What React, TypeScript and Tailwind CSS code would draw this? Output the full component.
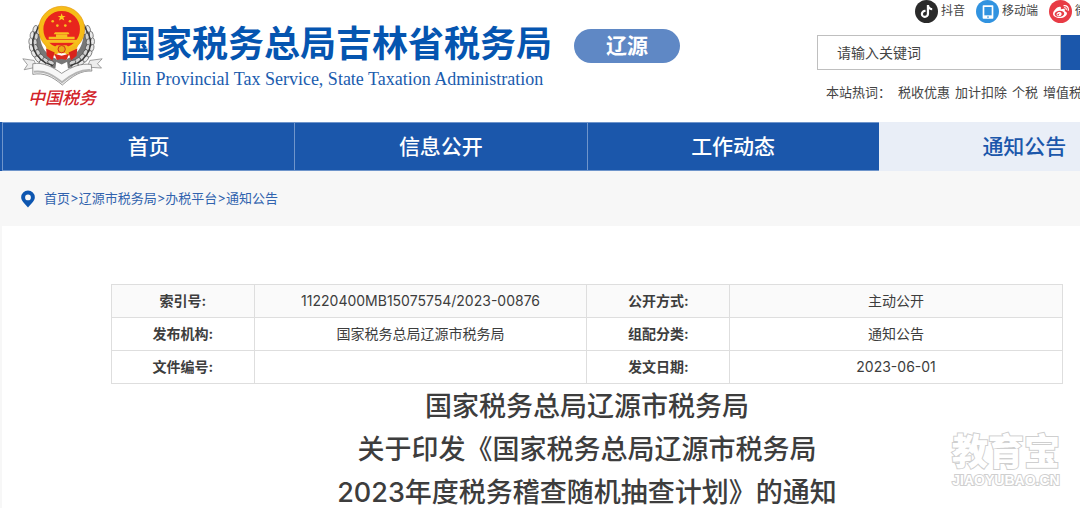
import { FaTiktok, FaWeibo } from 'react-icons/fa';

const navItems = [
  { label: '首页', active: false },
  { label: '信息公开', active: false },
  { label: '工作动态', active: false },
  { label: '通知公告', active: true },
];

const crumbs = ['首页', '辽源市税务局', '办税平台', '通知公告'];

const hotWords = ['税收优惠', '加计扣除', '个税', '增值税'];

const infoRows = [
  ['索引号:', '11220400MB15075754/2023-00876', '公开方式:', '主动公开'],
  ['发布机构:', '国家税务总局辽源市税务局', '组配分类:', '通知公告'],
  ['文件编号:', '', '发文日期:', '2023-06-01'],
];

const leaves = [
  { x: 108, y: 86, r: 20 },
  { x: 99, y: 104, r: 10 },
  { x: 95, y: 123, r: 0 },
  { x: 97, y: 142, r: -15 },
  { x: 104, y: 159, r: -28 },
  { x: 115, y: 174, r: -40 },
  { x: 129, y: 186, r: -52 },
  { x: 146, y: 194, r: -66 },
];

function WheatEar() {
  return (
    <g>
      <path d="M122 66 C84 100 80 158 128 192 L166 204 L170 176 C130 160 112 126 122 66Z" fill="#777" />
      {leaves.map((leaf) => (
        <g key={leaf.y} transform={`translate(${leaf.x} ${leaf.y}) rotate(${leaf.r})`}>
          <ellipse cx="-3" cy="0" rx="6" ry="11" fill="#e9e9e9" stroke="#555" strokeWidth="2" />
          <ellipse cx="10" cy="3" rx="6" ry="11" fill="#d2d2d2" stroke="#444" strokeWidth="2" />
          <path d="M3 -8V12" stroke="#333" strokeWidth="3" />
        </g>
      ))}
    </g>
  );
}

function Emblem() {
  return (
    <svg viewBox="60 10 252 250" className="h-[83px] w-[84px]" aria-hidden="true">
      <WheatEar />
      <g transform="translate(370 0) scale(-1 1)">
        <WheatEar />
      </g>
      <circle cx="185" cy="86" r="62" fill="#e8251d" stroke="#f6bd18" strokeWidth="14" />
      <circle cx="185" cy="86" r="69" fill="none" stroke="#e59a10" strokeWidth="2" />
      <path d="M185 38l3 8h9l-7 5 3 9-8-5-8 5 3-9-7-5h9z" fill="#fbd01c" />
      <g fill="#f7bf20">
        <circle cx="158" cy="62" r="4" />
        <circle cx="172" cy="75" r="4" />
        <circle cx="196" cy="75" r="4" />
        <circle cx="210" cy="62" r="4" />
        <path d="M165 95h40l4 6h-48zM168 102h34v7h-34zM146 109h78v7h-78z" />
        <path d="M138 118h94v9h-94z" />
      </g>
      <path d="M134 132l28 10 8-8h30l8 8 28-10-10 22-20 12-10-8h-22l-10 8-20-12z" fill="#f3b51a" />
      <path d="M138 144l26 12-7 24-17-14zM232 144l-26 12 7 24 17-14z" fill="#d9231b" />
      <circle cx="185" cy="146" r="11" fill="#e8a917" stroke="#d8281c" strokeWidth="3" />
      <path d="M163 160l22 6 22-6-7 18-15 6-15-6z" fill="#dc2a1e" />
      <path d="M160 180l25-4 25 4-25 12z" fill="#777" />
      {/* silver ribbon */}
      <path d="M68 175l34 5 8 20-38 8 10-15z" fill="#ededed" stroke="#777" strokeWidth="2" />
      <path d="M307 175l-37 5-8 20 43 3-12-13z" fill="#ededed" stroke="#777" strokeWidth="2" />
      <path
        d="M98 190C130 184 158 200 185 219C214 200 240 188 274 192L276 212C244 210 220 225 187 254C156 228 132 216 98 222Z"
        fill="#f7f7f7"
        stroke="#666"
        strokeWidth="2"
      />
      <path d="M101 214c34-4 56 8 85 32 28-24 56-39 86-37" fill="none" stroke="#b5b5b5" strokeWidth="6" />
    </svg>
  );
}

function Header() {
  return (
    <header className="bg-white">
      <div className="flex h-[122px] min-w-[1172px] justify-between">
        <div className="flex">
          <a href="#" className="ml-5 flex w-[84px] flex-col items-center pt-1">
            <Emblem />
            <span className="font-['Liberation_Serif','Noto_Sans_CJK_SC',serif] text-[17px] leading-6 font-medium text-[#d2232a] italic">
              中国税务
            </span>
          </a>
          <div className="ml-4 pt-5">
            <h1 className="text-[36px] leading-[48px] font-bold text-[#0555b0]">国家税务总局吉林省税务局</h1>
            <p className="font-['Liberation_Serif',serif] text-[18px] leading-[22px] text-[#1a5cae]">
              Jilin Provincial Tax Service, State Taxation Administration
            </p>
          </div>
          <span className="mt-[29px] ml-[22px] flex h-[34px] w-[106px] items-center justify-center rounded-full bg-[#5f88c5] text-[21px] font-bold text-white">
            辽源
          </span>
        </div>

        <div className="w-[355px]">
          <div className="ml-[98px] flex gap-[11px] text-[12px] leading-[23px] whitespace-nowrap text-[#444]">
            <a href="#" className="flex gap-[3px]">
              <span className="flex size-[23px] items-center justify-center rounded-full bg-[#2a2a2a] text-white">
                <FaTiktok size={13} />
              </span>
              <span className="-mt-px">抖音</span>
            </a>
            <a href="#" className="flex gap-[3px]">
              <span className="flex size-[23px] items-center justify-center rounded-full bg-[#3193e0]">
                <svg viewBox="0 0 24 24" className="size-4" fill="none" aria-hidden="true">
                  <rect x="4" y="2" width="16" height="20" rx="1" fill="#fff" />
                  <rect x="6.5" y="4.5" width="11" height="12.5" fill="#3193e0" />
                  <circle cx="12" cy="19.5" r="1.3" fill="#3193e0" />
                </svg>
              </span>
              <span className="-mt-px">移动端</span>
            </a>
            <a href="#" className="flex gap-[3px]">
              <span className="flex size-[23px] items-center justify-center rounded-full bg-[#e83b45] text-white">
                <FaWeibo size={16} />
              </span>
              <span className="-mt-px">微博</span>
            </a>
          </div>
          <form className="mt-3 flex h-[35px]">
            <input
              type="text"
              aria-label="搜索"
              placeholder="请输入关键词"
              className="w-[244px] border border-[#bfbfbf] px-[19px] text-[14px] text-[#444] placeholder:text-[#444]"
            />
            <button type="button" aria-label="搜索" className="flex-1 bg-[#1b57ab]" />
          </form>
          <div className="mt-3 ml-[9px] flex gap-[5px] text-[13px] leading-5 whitespace-nowrap text-[#444]">
            <span className="mr-0.5">本站热词：</span>
            {hotWords.map((word) => (
              <a key={word} href="#">
                {word}
              </a>
            ))}
          </div>
        </div>
      </div>
    </header>
  );
}

export default function App() {
  return (
    <div className="relative min-h-screen overflow-hidden bg-[#f7f7f7] font-['Inter','Noto_Sans_CJK_SC',sans-serif] text-[#3d3d3d]">
      <Header />

      <nav className="flex min-w-[1170px] bg-[#1b57ab] pl-0.5">
        {navItems.map((item) => (
          <a
            key={item.label}
            href="#"
            className={
              item.active
                ? 'flex-1 border-y border-[#e9eef7] bg-[#e9eef7] text-center text-[21px] leading-[47px] font-medium text-[#1b57ab]'
                : 'flex-1 border-y border-l border-[#6f95cb] text-center text-[21px] leading-[47px] font-medium text-white'
            }
          >
            {item.label}
          </a>
        ))}
      </nav>

      <div className="flex h-[55px] items-center gap-2 pl-5 text-[13px] text-[#3163ae]">
        <svg viewBox="0 0 16 20" className="h-[18px] w-4" aria-hidden="true">
          <path
            fill="#0d56b0"
            fillRule="evenodd"
            d="M8 .5A7.600 7.600 0 0 0 .4 8.100C.4 12.500 5 15.500 8 19.500c3-4 7.600-7 7.600-11.400A7.600 7.600 0 0 0 8 .5Zm0 4.500a3.200 3.200 0 1 1 0 6.400 3.200 3.200 0 0 1 0-6.400Z"
          />
        </svg>
        <div>
          {crumbs.map((crumb, i) => (
            <span key={crumb}>
              {i > 0 && '>'}
              <a href="#">{crumb}</a>
            </span>
          ))}
        </div>
      </div>

      <main className="ml-0.5 min-w-[1170px] bg-white px-[109px] pt-[58px]">
        <table className="w-full table-fixed border-collapse text-center text-[14px] leading-5">
          <colgroup>
            <col className="w-[15%]" />
            <col className="w-[35%]" />
            <col className="w-[15%]" />
            <col className="w-[35%]" />
          </colgroup>
          <tbody>
            {infoRows.map(([nameA, valueA, nameB, valueB]) => (
              <tr key={nameA} className="h-[33px] first:bg-[#fafafa]">
                <th className="border border-[#dedede] font-bold">{nameA}</th>
                <td className="border border-[#dedede]">{valueA}</td>
                <th className="border border-[#dedede] font-bold">{nameB}</th>
                <td className="border border-[#dedede]">{valueB}</td>
              </tr>
            ))}
          </tbody>
        </table>
        <h2 className="mt-px text-center text-[27px] leading-[43px] font-medium">
          国家税务总局辽源市税务局
          <br />
          关于印发《国家税务总局辽源市税务局
          <br />
          2023年度税务稽查随机抽查计划》的通知
        </h2>
      </main>

      {/* watermark */}
      <div className="absolute top-[432px] right-5 text-center text-white [paint-order:stroke] [-webkit-text-stroke:2px_#cfcfcf]">
        <div className="text-[36px] leading-10 font-black">教育宝</div>
        <div className="font-['Liberation_Sans',sans-serif] text-[14px] leading-4 font-bold">JIAOYUBAO.CN</div>
      </div>
    </div>
  );
}
